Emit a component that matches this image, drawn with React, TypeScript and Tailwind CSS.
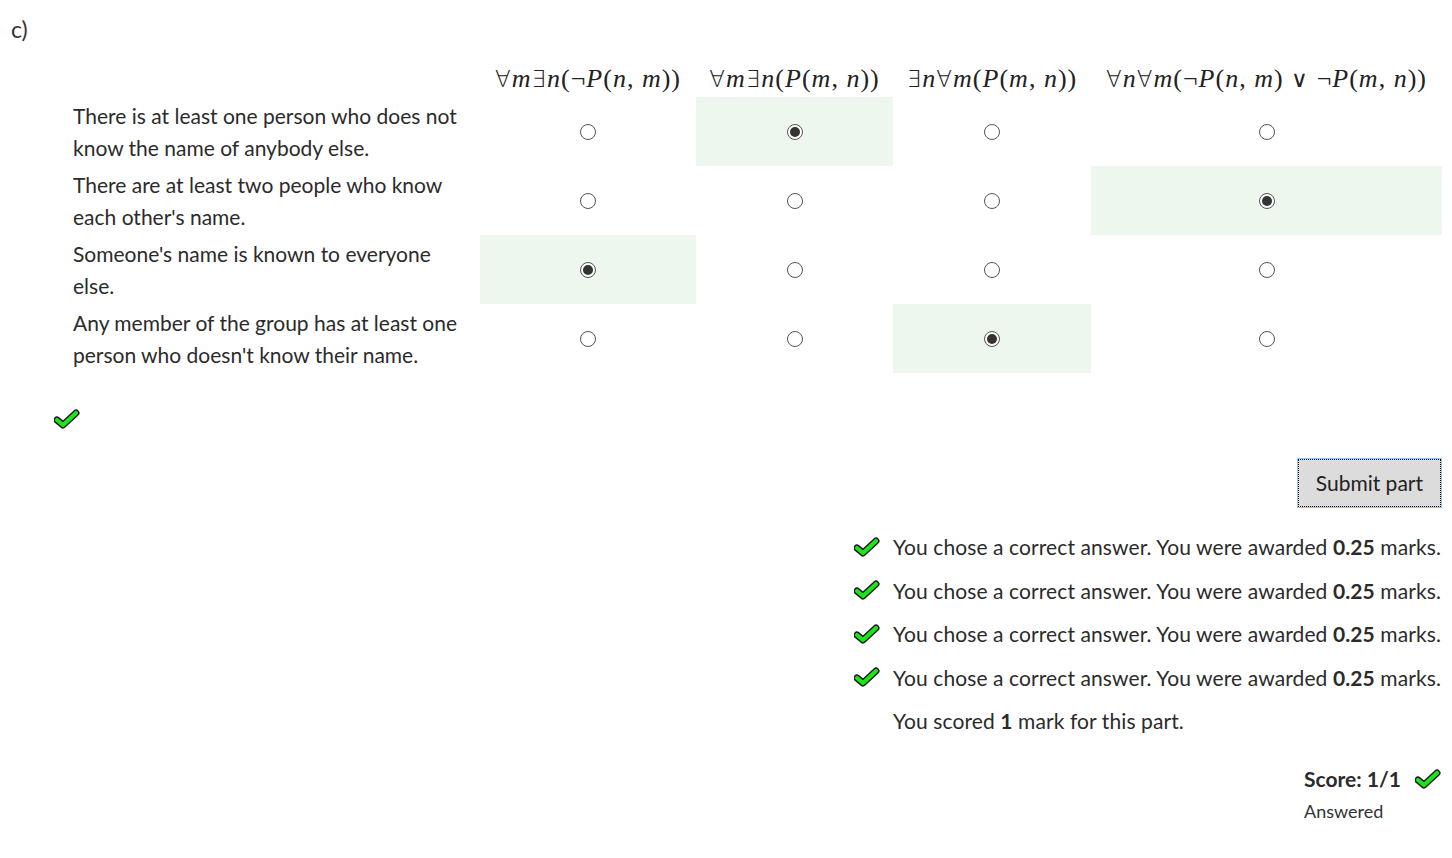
import React from "react";

const Check = ({ className = "" }: { className?: string }) => (
    <svg viewBox="0 0 26 20" width="26" height="20" className={className}>
        <path d="M3 11 L9 16 L22 4" fill="none" stroke="#1a1a1a" strokeWidth="7" strokeLinecap="round" strokeLinejoin="round" />
        <path d="M3 11 L9 16 L22 4" fill="none" stroke="#19e619" strokeWidth="4.2" strokeLinecap="round" strokeLinejoin="round" />
    </svg>
);

const Radio = ({ checked }: { checked: boolean }) => (
    <span className="flex w-[16px] h-[16px] rounded-full border border-[#555] bg-white items-center justify-center">
        {checked && <span className="w-[10px] h-[10px] rounded-full bg-[#333]" />}
    </span>
);

const I = ({ children }: { children: React.ReactNode }) => <span className="italic">{children}</span>;
// quantifier / logic symbols, thinner than the serif fallback
const S = ({ children }: { children: React.ReactNode }) => (
    <span className="font-['DejaVu_Sans',sans-serif] font-extralight text-[23px] leading-none">{children}</span>
);

const headers: React.ReactNode[] = [
    <><S>∀</S><I>m</I><S>∃</S><I>n</I>(¬<I>P</I>(<I>n</I>, <I>m</I>))</>,
    <><S>∀</S><I>m</I><S>∃</S><I>n</I>(<I>P</I>(<I>m</I>, <I>n</I>))</>,
    <><S>∃</S><I>n</I><S>∀</S><I>m</I>(<I>P</I>(<I>m</I>, <I>n</I>))</>,
    <><S>∀</S><I>n</I><S>∀</S><I>m</I>(¬<I>P</I>(<I>n</I>, <I>m</I>) <S>∨</S> ¬<I>P</I>(<I>m</I>, <I>n</I>))</>,
];

const rows = [
    { label: "There is at least one person who does not know the name of anybody else.", answer: 1 },
    { label: "There are at least two people who know each other's name.", answer: 3 },
    { label: "Someone's name is known to everyone else.", answer: 0 },
    { label: "Any member of the group has at least one person who doesn't know their name.", answer: 2 },
];

const colWidths = ["w-[216px]", "w-[197px]", "w-[198px]", "w-[351px]"];

export default function App() {
    return (
        <div className="w-[1452px] h-[858px] bg-white text-[#2b2b2b] font-['Lato',sans-serif] text-[21px] relative overflow-hidden">
            <div className="pl-[11px] pt-[14px] text-[23px] leading-[30px] text-[#333]">c)</div>

            <table className="ml-[73px] mt-[16px] border-collapse table-fixed">
                <thead>
                    <tr className="h-[37px]">
                        <th className="w-[407px]" />
                        {headers.map((h, i) => (
                            <th key={i} className={`${colWidths[i]} h-[37px] p-0 font-normal font-['Liberation_Serif',serif] text-[26px] tracking-[1px] text-center whitespace-nowrap leading-[30px] text-[#222]`}>
                                {h}
                            </th>
                        ))}
                    </tr>
                </thead>
                <tbody>
                    {rows.map((r, ri) => (
                        <tr key={ri} className="h-[69px]">
                            <td className="pr-[10px] leading-[32px] align-middle">{r.label}</td>
                            {headers.map((_, ci) => (
                                <td key={ci} className={`align-middle ${r.answer === ci ? "bg-[#edf7ed]" : ""}`}>
                                    <div className="flex justify-center"><Radio checked={r.answer === ci} /></div>
                                </td>
                            ))}
                        </tr>
                    ))}
                </tbody>
            </table>

            <div className="ml-[54px] mt-[36px]">
                <Check />
            </div>

            <div className="flex justify-end pr-[11px] mt-[30px]">
                <button className="h-[48px] px-[17px] bg-[#dcdcdc] border border-dotted border-black outline outline-1 outline-[#9cc0e6] text-[21px] text-[#222]">
                    Submit part
                </button>
            </div>

            <div className="flex justify-end pr-[11px] mt-[18px]">
                <ul className="flex flex-col tracking-[0.1px]">
                    {[0, 1, 2, 3].map((i) => (
                        <li key={i} className="flex items-center h-[43.5px]">
                            <span className="w-[39px] flex"><Check /></span>
                            <span>You chose a correct answer. You were awarded <b>0.25</b> marks.</span>
                        </li>
                    ))}
                    <li className="flex items-center h-[43.5px] pl-[39px]">
                        <span>You scored <b>1</b> mark for this part.</span>
                    </li>
                </ul>
            </div>

            <div className="flex justify-end pr-[11px] mt-[21px]">
                <div className="flex flex-col w-[137px]">
                    <div className="flex items-center justify-between h-[30px]">
                        <span className="font-bold text-[21px]">Score: 1/1</span>
                        <Check />
                    </div>
                    <div className="text-[18px] text-[#333] mt-[4px]">Answered</div>
                </div>
            </div>
        </div>
    );
}
